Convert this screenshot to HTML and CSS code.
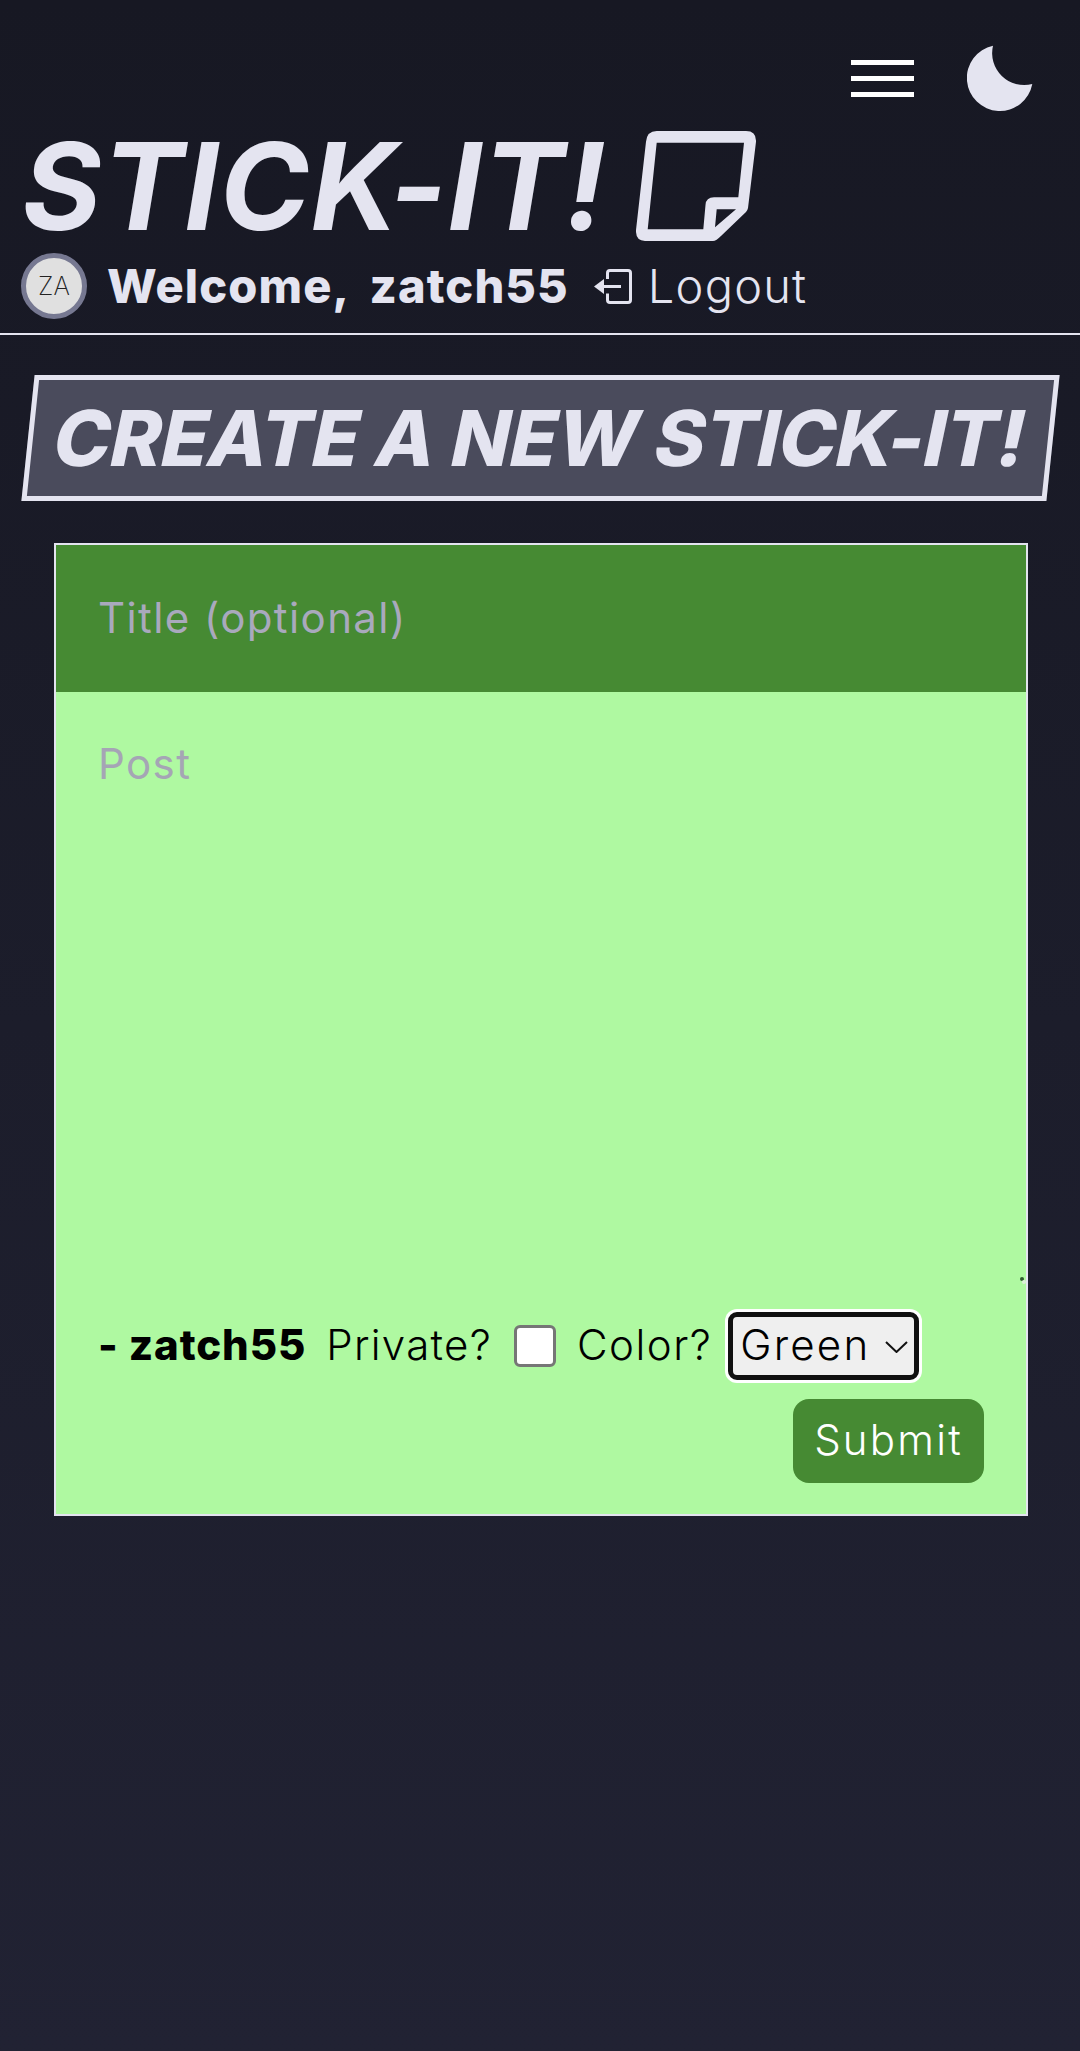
FILE: index.html
```html
<!DOCTYPE html>
<html lang="en">
<head>
<meta charset="utf-8">
<title>Stick-It!</title>
<link rel="stylesheet" href="styles.css">
</head>
<body>
<header class="site-header">
  <div class="topbar">
    <button class="burger" aria-label="Menu"><span></span><span></span><span></span></button>
    <svg class="moon" viewBox="0 0 66 66" aria-hidden="true"><path d="M26 .7A33 33 0 1 0 65.3 39A32 32 0 0 1 26 .7Z"/></svg>
  </div>
  <h1 class="brand">
    <span class="brand-text">STICK-IT!</span>
    <svg class="sticky" viewBox="0 0 121 110" aria-hidden="true"><path fill-rule="evenodd" d="M20.7 0H110Q120.5 0 120 10.7L112 77Q111.5 79.5 110 81L85.5 104.5Q80 110 77 110H9Q-.5 110 0 99L10 10.7Q11 0 20.7 0ZM20.7 11.7H108L102.3 66.3H78Q70 66.3 69.5 74L67.3 98.3H11.7ZM80.7 78.3H100L79 96.3Z"/></svg>
  </h1>
  <div class="userbar">
    <div class="avatar">ZA</div>
    <span class="welcome">Welcome, zatch55</span>
    <a class="logout" href="#">
      <svg class="logout-icon" viewBox="0 0 38 35" aria-hidden="true"><path class="logout-door" d="M13.5 10V4Q13.5 1.5 16 1.5H34Q36.5 1.5 36.5 4V31Q36.5 33.5 34 33.5H16Q13.5 33.5 13.5 31V24.5M8 17.5H27"/><path class="logout-head" d="M0 17.5L10 10V25Z"/></svg>
      <span class="logout-text">Logout</span>
    </a>
  </div>
</header>
<main>
  <h2 class="page-title"><span class="page-title-text">CREATE A NEW STICK-IT!</span></h2>
  <form class="note-form">
    <input class="note-title" type="text" placeholder="Title (optional)">
    <textarea class="note-body" placeholder="Post"></textarea>
    <div class="note-meta">
      <strong class="author">- zatch55</strong>
      <label class="meta-label" for="private">Private?</label>
      <input class="private-box" id="private" type="checkbox">
      <label class="meta-label color-label" for="color">Color?</label>
      <div class="select-wrap">
        <select class="color-select" id="color"><option>Green</option><option>Yellow</option><option>Blue</option></select>
        <svg class="select-arrow" viewBox="0 0 23 12" aria-hidden="true"><path d="M1 1L11.5 11L22 1"/></svg>
      </div>
    </div>
    <div class="note-actions">
      <button class="submit" type="button">Submit</button>
    </div>
  </form>
</main>
</body>
</html>
```
FILE: styles.css
```css
* { box-sizing: border-box; }
html, body { margin: 0; padding: 0; }
body {
  min-height: 2051px;
  background: linear-gradient(180deg, #171823 0%, #212233 100%);
  color: #e4e4f0;
  font-family: Inter, "Liberation Sans", sans-serif;
}
.topbar {
  display: flex;
  justify-content: flex-end;
  align-items: center;
  gap: 53px;
  padding: 45px 47px 0 0;
}
.burger {
  display: flex;
  flex-direction: column;
  gap: 11px;
  width: 63px;
  padding: 0;
  background: none;
  border: 0;
}
.burger span { display: block; height: 5px; background: #fff; }
.moon { width: 66px; height: 66px; fill: #e4e4f0; }
.brand {
  display: flex;
  align-items: center;
  justify-content: space-between;
  width: 757px;
  height: 110px;
  margin: 20px 0 0 0;
  padding-left: 22px;
  font-size: 121px;
  font-weight: 700;
  font-style: italic;
  line-height: 110px;
  letter-spacing: 1.3px;
}
.sticky { width: 121px; height: 110px; fill: #e4e4f0; flex: none; }
.userbar {
  display: flex;
  align-items: center;
  height: 66px;
  margin: 12px 0 14px;
  padding-left: 21px;
}
.avatar {
  display: flex;
  align-items: center;
  justify-content: center;
  width: 66px;
  height: 66px;
  border: 5px solid #767891;
  border-radius: 50%;
  background: #e0e0e0;
  color: #222;
  font-size: 25px;
  font-weight: 200;
}
.welcome {
  margin-left: 20px;
  padding-bottom: 2px;
  font-size: 47px;
  font-weight: 800;
  letter-spacing: 1.1px;
  word-spacing: 10px;
  white-space: nowrap;
}
.logout {
  display: flex;
  align-items: center;
  gap: 16px;
  margin-left: 25px;
  color: #e4e4f0;
  text-decoration: none;
  font-size: 47px;
  font-weight: 300;
  letter-spacing: 1.2px;
}
.logout-text { padding-bottom: 2px; }
.logout-icon { width: 38px; height: 35px; }
.logout-door { fill: none; stroke: #e4e4f0; stroke-width: 3; }
.logout-head { fill: #e4e4f0; }
.site-header { border-bottom: 2px solid #e4e4f0; }
main { display: block; }
.page-title {
  width: 1025px;
  height: 126px;
  margin: 40px 0 0 28px;
  display: flex;
  align-items: center;
  justify-content: center;
  border: 5px solid #e4e4f0;
  background: #4a4b5c;
  transform: skewX(-6deg);
  font-size: 77px;
  font-weight: 800;
  line-height: 1;
}
.page-title-text { transform: skewX(-6deg); white-space: nowrap; letter-spacing: -.2px; }
.note-form {
  position: relative;
  display: flex;
  flex-direction: column;
  width: 974px;
  height: 973px;
  margin: 42px 0 0 54px;
  border: 2px solid #e4e4f0;
  background: #aff9a1;
}
.note-form::before,
.note-form::after {
  content: "";
  position: absolute;
  width: 4px;
  height: 4px;
  border-radius: 50%;
}
.note-form::before { top: 732px; left: 964px; background: #2f5c2f; }
.note-form::after { top: 735px; left: 966px; background: #dcefd8; }
.note-title, .note-body {
  display: block;
  width: 100%;
  border: 0;
  outline: 0;
  font: 400 42px/60px Inter, "Liberation Sans", sans-serif;
  letter-spacing: 1.4px;
}
.note-title {
  height: 147px;
  padding: 0 42px 2px;
  background: #468a33;
  color: #fff;
}
.note-title::placeholder { color: #a9a9bd; opacity: 1; }
.note-body {
  height: 590px;
  padding: 42px 42px 0;
  background: #aff9a1;
  color: #000;
  resize: none;
}
.note-body::placeholder { color: #a5a5b5; opacity: 1; }
.note-meta {
  display: flex;
  align-items: center;
  padding: 30px 42px 0;
  color: #000;
  font-size: 42px;
}
.author {
  margin-right: 20px;
  padding-bottom: 3px;
  font-weight: 800;
  white-space: nowrap;
  letter-spacing: .9px;
}
.meta-label { padding-bottom: 3px; font-weight: 300; white-space: nowrap; letter-spacing: 1.3px; }
.color-label { letter-spacing: 1.5px; }
.private-box {
  appearance: none;
  width: 42px;
  height: 42px;
  margin: 0 21px 0 22px;
  border: 3px solid #767676;
  border-radius: 6px;
  background: #fff;
  flex: none;
}
.select-wrap { position: relative; margin-left: 16px; }
.color-select {
  display: block;
  appearance: none;
  width: 191px;
  height: 68px;
  padding: 0 0 3px 7px;
  border: 5px solid #101010;
  border-radius: 9px;
  box-shadow: 0 0 0 3px #fff;
  background-color: #efefef;
  color: #000;
  font: 300 42px Inter, "Liberation Sans", sans-serif;
  letter-spacing: 2.2px;
}
.select-arrow {
  position: absolute;
  top: 29px;
  right: 11px;
  width: 23px;
  height: 12px;
  fill: none;
  stroke: #111;
  stroke-width: 2;
  pointer-events: none;
}
.note-actions { display: flex; justify-content: flex-end; padding: 19px 42px 0; }
.submit {
  height: 84px;
  width: 191px;
  padding: 0 0 4px;
  border: 0;
  border-radius: 16px;
  background: #468a33;
  color: #fff;
  font: 300 42px Inter, "Liberation Sans", sans-serif;
  letter-spacing: 2.2px;
}
```
